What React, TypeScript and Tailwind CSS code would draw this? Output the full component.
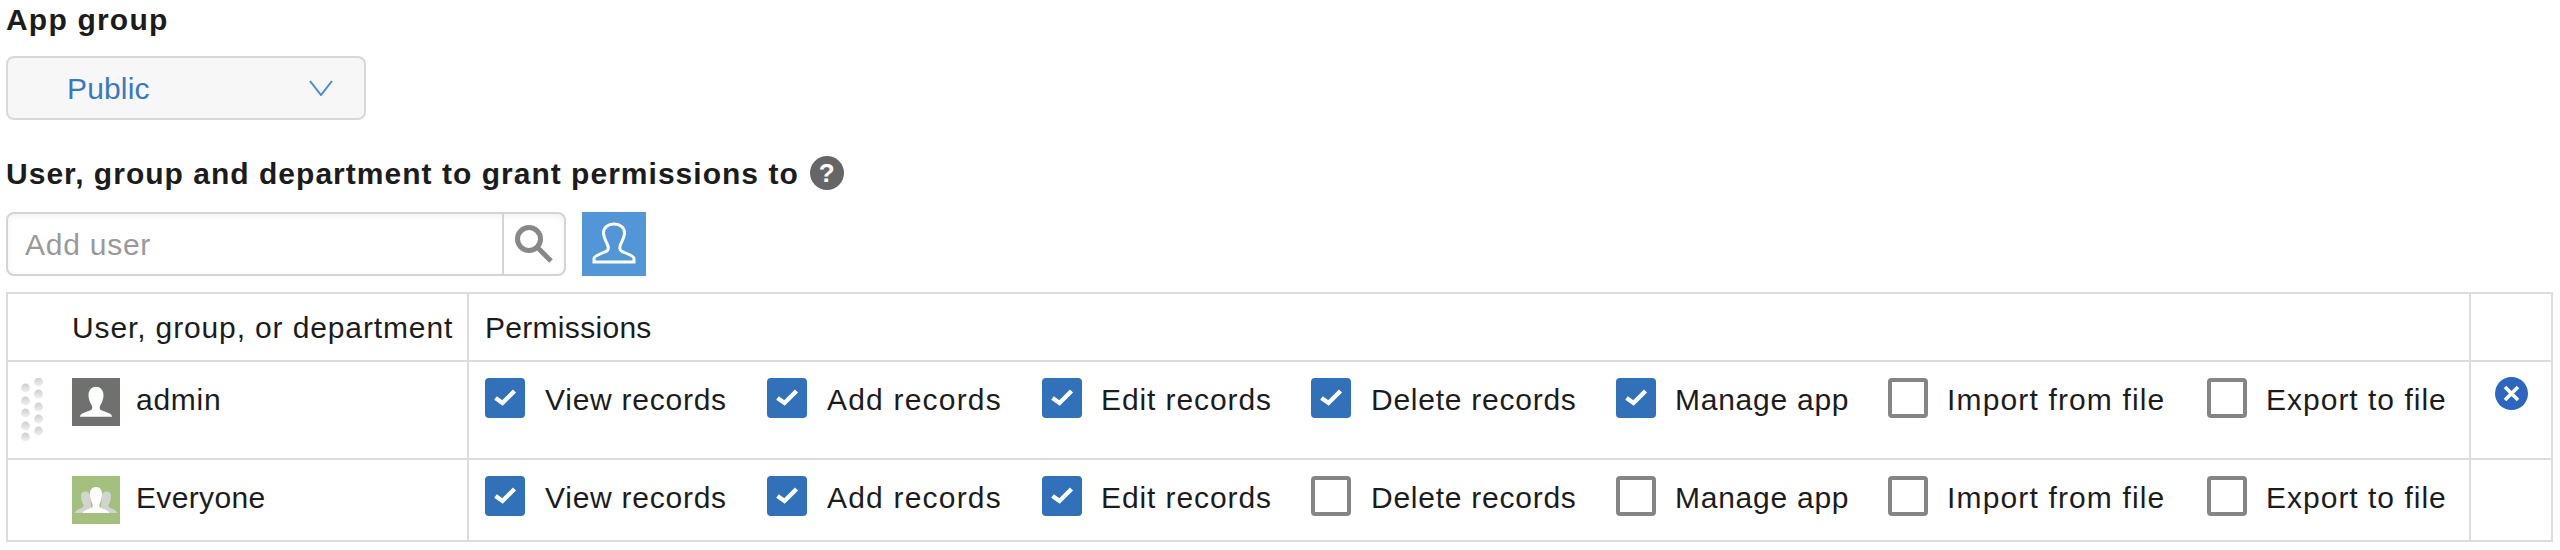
import React from "react";

const PERMS = [
  { name: "View records", item: "w-[282px] gap-[20px]", text: "tracking-[0.75px]" },
  { name: "Add records", item: "w-[275px] gap-[20px]", text: "tracking-[1.2px]" },
  { name: "Edit records", item: "w-[269px] gap-[19px]", text: "tracking-[0.9px]" },
  { name: "Delete records", item: "w-[305px] gap-[20px]", text: "tracking-[0.75px]" },
  { name: "Manage app", item: "w-[272px] gap-[19px]", text: "tracking-[0.75px]" },
  { name: "Import from file", item: "w-[319px] gap-[19px]", text: "tracking-[1.15px]" },
  { name: "Export to file", item: "w-[240px] gap-[19px]", text: "tracking-[1px]" },
];

function Box({ on }: { on: boolean }) {
  if (on) {
    return (
      <span className="w-[40px] h-[40px] shrink-0 rounded-[4px] bg-[#3071ba] flex">
        <svg width="40" height="40" viewBox="0 0 40 40">
          <path d="M10.5 20 L17.5 25 L29.5 13" fill="none" stroke="#fff" strokeWidth="4.4" />
        </svg>
      </span>
    );
  }
  return <span className="w-[40px] h-[40px] shrink-0 rounded-[4px] border-[4px] border-[#858585] bg-white" />;
}

function Perms({ flags }: { flags: boolean[] }) {
  return (
    <div className="flex items-start">
      {PERMS.map((p, i) => (
        <label key={p.name} className={`flex items-start shrink-0 ${p.item}`}>
          <Box on={flags[i]} />
          <span className={`leading-[44px] whitespace-nowrap ${p.text}`}>{p.name}</span>
        </label>
      ))}
    </div>
  );
}

function Grip() {
  const left = [388, 401, 413, 426, 437];
  const right = [382, 394, 407, 419, 431];
  return (
    <svg width="24" height="70" viewBox="20 378 24 70" className="shrink-0">
      <defs>
        <linearGradient id="dot" x1="0" y1="0" x2="0" y2="1">
          <stop offset="0" stopColor="#cfcfcf" />
          <stop offset="1" stopColor="#f0f0f0" />
        </linearGradient>
      </defs>
      {left.map((y) => <circle key={y} cx="25.5" cy={y} r="4.4" fill="url(#dot)" />)}
      {right.map((y) => <circle key={y} cx="38.5" cy={y} r="4.4" fill="url(#dot)" />)}
    </svg>
  );
}

const PERSON = "M8 38.7 C8 36 12 34.5 18 32.5 C21 31.5 20.5 29 19.5 27 C17.5 24 16.5 20 16.5 17 C16.5 12 20 8.7 24 8.7 C28 8.7 31.5 12 31.5 17 C31.5 20 30.5 24 28.5 27 C27.5 29 27 31.5 30 32.5 C36 34.5 40 36 40 38.7 Z";

function AdminAvatar() {
  return (
    <svg width="48" height="48" viewBox="0 0 48 48" className="shrink-0">
      <rect width="48" height="48" fill="#6f716f" />
      <path d={PERSON} fill="#fff" />
    </svg>
  );
}

function GroupAvatar() {
  return (
    <svg width="48" height="48" viewBox="0 0 48 48" className="shrink-0">
      <rect width="48" height="48" fill="#a4c07e" />
      <g fill="#d2d4cf">
        <path d="M3 37 C3 34.5 7 33 10.5 31.5 C12 30.5 11.5 29 11 28 C9.5 25.5 9 22 9 20 C9 16.5 11 15.5 13.5 15.5 C16 15.5 18 17 18 20 L20 37 Z" />
        <path d="M45 37 C45 34.5 41 33 37.5 31.5 C36 30.5 36.5 29 37 28 C38.5 25.5 39 22 39 20 C39 16.5 37 15.5 34.5 15.5 C32 15.5 30 17 30 20 L28 37 Z" />
      </g>
      <path d="M11 37 L11 36 C13 34 17 33 20 31.5 C21 30.5 20.5 28.5 20 27 C18.5 24 18 20 18 17.5 C18 13.5 20.5 11 24 11 C27.5 11 30 13.5 30 17.5 C30 20 29.5 24 28 27 C27.5 28.5 27 30.5 28 31.5 C31 33 35 34 37 36 L37 37 Z" fill="#fff" />
    </svg>
  );
}

export default function App() {
  return (
    <div className="w-[2560px] h-[550px] bg-white overflow-hidden pl-[6px] text-[#1c1c1c] text-[30px] tracking-[0.75px] font-['Liberation_Sans',sans-serif]">
      <h2 className="font-bold h-[40px] leading-[40px] tracking-[1.2px]">App group</h2>
      <button className="mt-[16px] w-[360px] h-[64px] rounded-[8px] border-2 border-[#d8d8d8] bg-[#f7f7f7] flex items-center pl-[59px] pr-[31px] justify-between text-[#3a78c2] tracking-[0.15px]">
        <span>Public</span>
        <svg width="24" height="16" viewBox="0 0 24 16">
          <path d="M1 1 L12 15 L23 1" fill="none" stroke="#4a8ad0" strokeWidth="2" />
        </svg>
      </button>

      <div className="mt-[33px] h-[40px] flex items-center gap-[11px]">
        <h2 className="font-bold tracking-[1.02px]">User, group and department to grant permissions to</h2>
        <span className="w-[34px] h-[34px] rounded-full bg-[#666666] text-white font-bold text-[26px] tracking-normal flex items-center justify-center">?</span>
      </div>

      <div className="mt-[19px] flex gap-[16px]">
        <div className="w-[560px] h-[64px] rounded-[8px] border-2 border-[#d4d4d4] flex shadow-[inset_0_2px_6px_rgba(0,0,0,0.06)]">
          <input
            placeholder="Add user"
            className="flex-1 min-w-0 pl-[17px] bg-transparent outline-none placeholder:text-[#999999]"
          />
          <span className="w-[62px] border-l-2 border-[#d4d4d4] flex items-center justify-center">
            <svg width="40" height="40" viewBox="0 0 40 40">
              <circle cx="15" cy="15" r="11.5" fill="none" stroke="#888888" strokeWidth="5" />
              <path d="M23 23 L37 37" stroke="#888888" strokeWidth="5" />
            </svg>
          </span>
        </div>
        <span className="w-[64px] h-[64px] bg-[#5296d8] flex">
          <svg width="64" height="64" viewBox="0 0 64 64">
            <path
              d="M12 50 V46.5 C12 44 19 41.5 24 39.5 C27 38 26.5 34.5 25 31.5 C23 27.5 21.5 24 21.5 21 C21.5 15.5 26 12 32 12 C38 12 42.5 15.5 42.5 21 C42.5 24 41 27.5 39 31.5 C37.5 34.5 37 38 40 39.5 C45 41.5 52 44 52 46.5 V50 Z"
              fill="none"
              stroke="#fff"
              strokeWidth="3"
            />
          </svg>
        </span>
      </div>

      <table className="mt-[16px] table-fixed w-[2547px] border-separate border-spacing-0 border-t-2 border-l-2 border-[#dcdcdc] font-normal">
        <colgroup>
          <col className="w-[461px]" />
          <col className="w-[2002px]" />
          <col className="w-[82px]" />
        </colgroup>
        <thead>
          <tr className="h-[68px]">
            <th className="border-r-2 border-b-2 border-[#dcdcdc] pl-[64px] text-left font-normal whitespace-nowrap tracking-[0.87px]">User, group, or department</th>
            <th className="border-r-2 border-b-2 border-[#dcdcdc] pl-[16px] text-left font-normal tracking-[0.3px]">Permissions</th>
            <th className="border-r-2 border-b-2 border-[#dcdcdc]" />
          </tr>
        </thead>
        <tbody>
          <tr className="h-[98px]">
            <td className="border-r-2 border-b-2 border-[#dcdcdc] align-top pt-[16px] pl-[12px]">
              <div className="flex items-start">
                <Grip />
                <span className="ml-[28px]"><AdminAvatar /></span>
                <span className="ml-[16px] leading-[44px]">admin</span>
              </div>
            </td>
            <td className="border-r-2 border-b-2 border-[#dcdcdc] align-top pt-[16px] pl-[16px]">
              <Perms flags={[true, true, true, true, true, false, false]} />
            </td>
            <td className="border-r-2 border-b-2 border-[#dcdcdc] align-top pt-[15px]">
              <div className="flex justify-center">
                <svg width="33" height="33" viewBox="0 0 33 33">
                  <circle cx="16.5" cy="16.5" r="16.5" fill="#2b66c2" />
                  <path d="M10 10 L23 23 M23 10 L10 23" stroke="#fff" strokeWidth="3.6" />
                </svg>
              </div>
            </td>
          </tr>
          <tr className="h-[82px]">
            <td className="border-r-2 border-b-2 border-[#dcdcdc] align-top pt-[16px] pl-[64px]">
              <div className="flex items-start">
                <GroupAvatar />
                <span className="ml-[16px] leading-[44px] tracking-[0.35px]">Everyone</span>
              </div>
            </td>
            <td className="border-r-2 border-b-2 border-[#dcdcdc] align-top pt-[16px] pl-[16px]">
              <Perms flags={[true, true, true, false, false, false, false]} />
            </td>
            <td className="border-r-2 border-b-2 border-[#dcdcdc]" />
          </tr>
        </tbody>
      </table>
    </div>
  );
}
